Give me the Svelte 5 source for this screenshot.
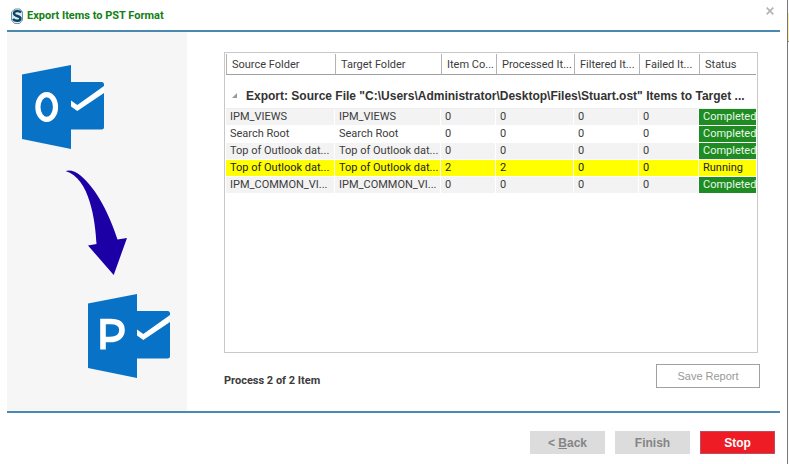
<script>
  const columns = [
    "Source Folder",
    "Target Folder",
    "Item Co...",
    "Processed It...",
    "Filtered It...",
    "Failed It...",
    "Status"
  ];

  const group = 'Export: Source File "C:\\Users\\Administrator\\Desktop\\Files\\Stuart.ost" Items to Target ...';

  let rows = [
    { folder: "IPM_VIEWS", items: 0, processed: 0, filtered: 0, failed: 0, status: "Completed" },
    { folder: "Search Root", items: 0, processed: 0, filtered: 0, failed: 0, status: "Completed" },
    { folder: "Top of Outlook dat...", items: 0, processed: 0, filtered: 0, failed: 0, status: "Completed" },
    { folder: "Top of Outlook dat...", items: 2, processed: 2, filtered: 0, failed: 0, status: "Running" },
    { folder: "IPM_COMMON_VI...", items: 0, processed: 0, filtered: 0, failed: 0, status: "Completed" }
  ];

  let expanded = true;
</script>

<div class="window">
  <div class="dialog">
    <header>
      <svg class="logo" width="12" height="16" viewBox="0 0 12 16">
        <path d="M4 1h5l2.500 3v8l-3 3.500h-5L.5 12V4z" fill="#dcecf3" stroke="#6a97ad" stroke-width="1" />
        <path d="M10 4.500C8.500 2.500 3 2.500 3 5.500c0 3 6.500 2 6.500 5 0 3-5.500 3-7.500.5" fill="none" stroke="#0d4260" stroke-width="2.400" />
      </svg>
      <h1>Export Items to PST Format</h1>
      <button class="close" aria-label="Close">
        <svg width="8" height="8" viewBox="0 0 8 8">
          <path d="M.7.7l6.600 6.600M7.300.7L.7 7.300" stroke="#b4b4b4" stroke-width="1.700" />
        </svg>
      </button>
    </header>

    <div class="body">
      <aside>
        <svg width="180" height="379" viewBox="7 32 180 379">
          <g fill="#0872c6">
            <path d="M22 74.500L71 65v84l-49-10z" />
            <path d="M71 82h30.500q2.500 0 2.500 2.500v42.500q0 2.500-2.500 2.500H71z" />
            <path d="M71 100.500l6.300 4.500L104 86v7L77.300 111 71 106.500z" fill="#fff" />
          </g>
          <ellipse cx="46.700" cy="107" rx="8.800" ry="12.400" fill="none" stroke="#fff" stroke-width="5.200" />
          <path d="M65.500 171C70 169.500 75 171 80.500 175.500C97 189 110 216 117.500 239.500L127 238L113.700 275L88 245.500L96.500 244C95.500 222 90 178 65.500 171z" fill="#1c00a6" />
          <g fill="#0872c6">
            <path d="M88 303.500l49-9.500v84l-49-10z" />
            <path d="M137 311h30.500q2.500 0 2.500 2.500V356q0 2.500-2.500 2.500H137z" />
            <path d="M137 329.500l6.300 4.500L170 315v7L143.300 340 137 335.500z" fill="#fff" />
          </g>
          <path d="M103 349.500V321.500h7.500c8 0 11.500 3 11.500 8.500s-4 9.500-12 9.500h-7" fill="none" stroke="#fff" stroke-width="5.600" />
        </svg>
      </aside>

      <main>
        <div class="grid">
          <table>
            <colgroup>
              <col class="folder" />
              <col class="target" />
              <col class="count" />
              <col class="processed" />
              <col class="filtered" />
              <col class="failed" />
              <col class="status" />
            </colgroup>
            <thead>
              <tr>
                {#each columns as column}
                  <th scope="col">{column}</th>
                {/each}
              </tr>
            </thead>
            <tbody>
              <tr class="group">
                <td colspan="7">
                  <button class="toggle" aria-expanded={expanded} on:click={() => expanded = !expanded}>
                    <svg width="5" height="5" viewBox="0 0 5 5"><path d="M5 0v5H0z" fill="#999" /></svg>
                    <span>{group}</span>
                  </button>
                </td>
              </tr>
              {#if expanded}
                {#each rows as row}
                  <tr class="item" class:running={row.status === "Running"}>
                    <td>{row.folder}</td>
                    <td>{row.folder}</td>
                    <td>{row.items}</td>
                    <td>{row.processed}</td>
                    <td>{row.filtered}</td>
                    <td>{row.failed}</td>
                    <td class="state" class:completed={row.status === "Completed"}>{row.status}</td>
                  </tr>
                {/each}
              {/if}
            </tbody>
          </table>
        </div>

        <div class="report">
          <p>Process 2 of 2 Item</p>
          <button class="save" disabled>Save Report</button>
        </div>
      </main>
    </div>

    <footer>
      <button disabled>&lt; <u>B</u>ack</button>
      <button disabled>Finish</button>
      <button class="stop">Stop</button>
    </footer>
  </div>
  <div class="behind"><span></span></div>
</div>

<style>
  :global(body) {
    background: white;
  }

  .window {
    display: flex;
    min-height: 100vh;
    background: white;
    font-family: "Liberation Sans", Arial, sans-serif;
    font-size: 11px;
    color: #3c3c3c;
  }

  .dialog {
    flex: 1;
    min-width: 0;
    padding: 0 7px;
  }

  .behind {
    width: 1px;
    border-left: 1px solid #777;
    padding-top: 13px;
  }

  .behind span {
    display: block;
    height: 28px;
    background: #f5edaf;
    border-bottom: 1px solid #888;
  }

  button {
    font-family: inherit;
    padding: 0;
    border: none;
    background: none;
  }

  header {
    display: flex;
    align-items: center;
    gap: 4px;
    height: 30px;
    padding: 0 6px 0 4px;
    border-bottom: 2px solid #4a8aae;
  }

  .logo {
    margin-top: 2px;
  }

  h1 {
    flex: 1;
    margin: 2px 0 0;
    font-family: Roboto, sans-serif;
    font-size: 11px;
    line-height: 16px;
    font-weight: 700;
    color: #138013;
  }

  .close {
    align-self: flex-start;
    height: 8px;
    margin-top: 7px;
  }

  .close svg, aside svg {
    display: block;
  }

  .body {
    display: flex;
    border-bottom: 2px solid #4a8aae;
  }

  aside {
    width: 180px;
    background: #f6f6f6;
  }

  main {
    flex: 1;
    min-width: 0;
    padding: 20px 20px 0 37px;
  }

  .grid {
    box-sizing: border-box;
    min-height: 301px;
    margin-right: 2px;
    padding: 1px;
    border: 1px solid #c8c8c8;
  }

  table {
    width: 100%;
    table-layout: fixed;
    border-collapse: separate;
    border-spacing: 0;
    font-family: Roboto, sans-serif;
  }

  .folder {
    width: 109px;
  }

  .target {
    width: 106px;
  }

  .count {
    width: 55px;
  }

  .processed {
    width: 78px;
  }

  .filtered {
    width: 65px;
  }

  .failed {
    width: 60px;
  }

  th, td {
    box-sizing: border-box;
    overflow: hidden;
    white-space: nowrap;
    text-align: left;
  }

  th {
    height: 21px;
    padding: 0 0 0 5px;
    border-left: 1px solid #b4b4b4;
    border-bottom: 1px solid #a0a0a0;
    font-weight: 400;
  }

  .group td {
    height: 34px;
    padding: 8px 0 0 6px;
    border-bottom: 1px solid #eee;
  }

  .toggle {
    display: flex;
    align-items: center;
    gap: 9px;
    color: #333;
    font-family: "Liberation Sans", Arial, sans-serif;
    font-size: 12px;
    font-weight: 700;
  }

  .item td {
    height: 17px;
    padding: 0 0 0 4px;
    border-right: 1px solid white;
    border-bottom: 1px solid white;
    line-height: 16px;
  }

  .item:nth-child(even) td {
    background: #f3f3f3;
  }

  .item.running td {
    background: #ff0;
    color: #222;
  }

  .item .state {
    border-right: none;
  }

  .item .completed, .item:nth-child(even) .completed {
    background: #1e8c22;
    color: #e8f8e8;
  }

  .report {
    display: flex;
    justify-content: space-between;
    height: 47px;
    padding-top: 11px;
  }

  p {
    margin: 8px 0 0;
    font-family: Roboto, sans-serif;
    font-size: 11px;
    line-height: 18px;
    font-weight: 700;
  }

  .save {
    width: 104px;
    height: 24px;
    border: 1px solid #a0a0a0;
    background: white;
    color: #999;
    font-size: 11px;
  }

  footer {
    display: flex;
    justify-content: flex-end;
    gap: 10px;
    padding: 18px 5px 9px 0;
  }

  footer button {
    width: 75px;
    height: 23px;
    background: #dcdcdc;
    color: #858585;
    font-size: 12px;
    font-weight: 700;
  }

  footer .stop {
    border: 1px solid #b85060;
    background: #ee1c25;
    color: white;
  }
</style>
